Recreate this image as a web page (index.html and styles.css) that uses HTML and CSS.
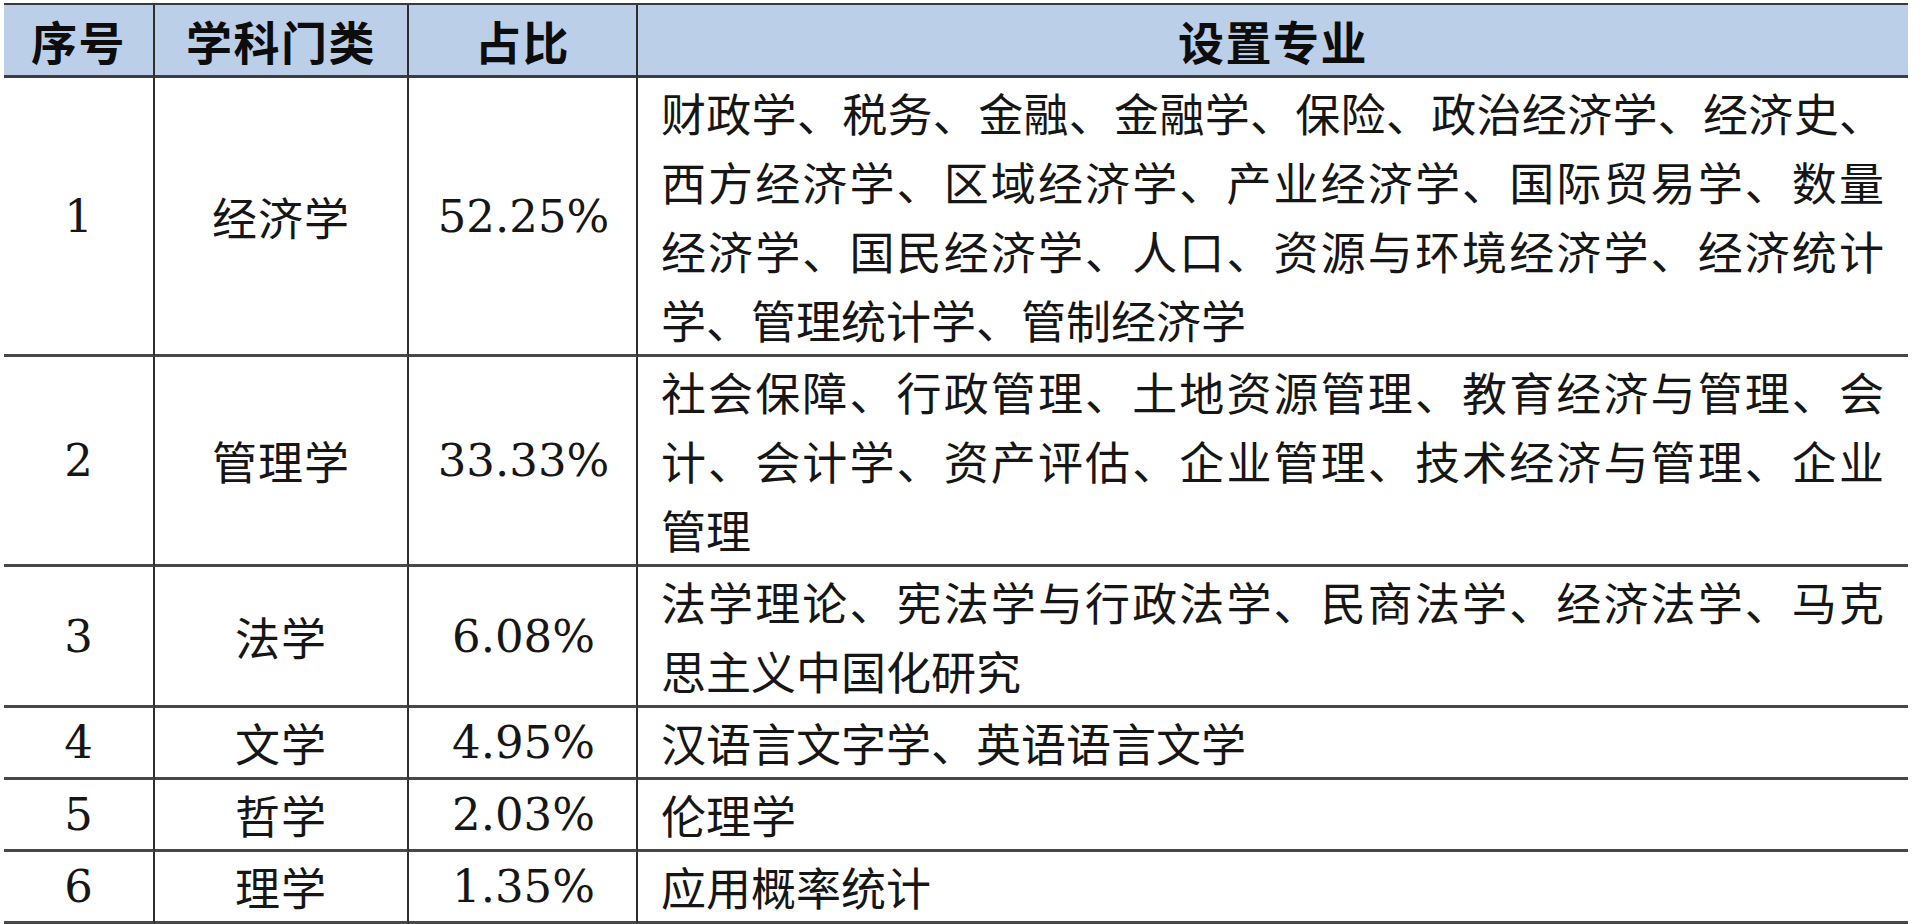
FILE: index.html
```html
<!DOCTYPE html>
<html lang="zh-CN">
<head>
<meta charset="utf-8">
<title>学科门类占比</title>
<link rel="stylesheet" href="styles.css">
</head>
<body>
<div class="table" role="table">
  <div class="th">序号</div>
  <div class="th">学科门类</div>
  <div class="th">占比</div>
  <div class="th last">设置专业</div>

  <div class="td num">1</div>
  <div class="td name">经济学</div>
  <div class="td pct">52.25%</div>
  <div class="td majors">
    <span class="ln">财政学、税务、金融、金融学、保险、政治经济学、经济史、</span>
    <span class="ln">西方经济学、区域经济学、产业经济学、国际贸易学、数量</span>
    <span class="ln">经济学、国民经济学、人口、资源与环境经济学、经济统计</span>
    <span class="end">学、管理统计学、管制经济学</span>
  </div>

  <div class="td num">2</div>
  <div class="td name">管理学</div>
  <div class="td pct">33.33%</div>
  <div class="td majors">
    <span class="ln">社会保障、行政管理、土地资源管理、教育经济与管理、会</span>
    <span class="ln">计、会计学、资产评估、企业管理、技术经济与管理、企业</span>
    <span class="end">管理</span>
  </div>

  <div class="td num">3</div>
  <div class="td name">法学</div>
  <div class="td pct">6.08%</div>
  <div class="td majors">
    <span class="ln">法学理论、宪法学与行政法学、民商法学、经济法学、马克</span>
    <span class="end">思主义中国化研究</span>
  </div>

  <div class="td num">4</div>
  <div class="td name">文学</div>
  <div class="td pct">4.95%</div>
  <div class="td majors"><span class="end">汉语言文字学、英语语言文学</span></div>

  <div class="td num">5</div>
  <div class="td name">哲学</div>
  <div class="td pct">2.03%</div>
  <div class="td majors"><span class="end">伦理学</span></div>

  <div class="td num">6</div>
  <div class="td name">理学</div>
  <div class="td pct">1.35%</div>
  <div class="td majors"><span class="end">应用概率统计</span></div>
</div>
</body>
</html>
```

FILE: styles.css
```css
html, body {
  margin: 0;
  padding: 0;
  background: #ffffff;
}

body {
  width: 1920px;
  height: 924px;
  overflow: hidden;
  color: #161616;
  font-family: "DejaVu Serif", "Noto Sans CJK SC", serif;
}

.table {
  display: grid;
  grid-template-columns: 151px 254px 229px 1270px;
  margin: 3px 0 0 4px;
  width: 1904px;
  border-top: 2px solid #3a3a3a;
}

.th,
.td {
  box-sizing: border-box;
  border-bottom: 3px solid #484848;
  border-right: 2px solid #2e2e2e;
}

.th {
  display: flex;
  align-items: center;
  justify-content: center;
  height: 73px;
  background: #bccfe9;
  border-bottom-color: #3d3d3d;
  font-family: "Noto Sans CJK SC", sans-serif;
  font-weight: 700;
  font-size: 46px;
  letter-spacing: 1.5px;
  line-height: 70px;
  color: #0d0d0d;
}

.th.last,
.td.majors {
  border-right: none;
}

.td {
  font-size: 45px;
  line-height: 69px;
}

.num,
.name,
.pct {
  display: flex;
  align-items: center;
  justify-content: center;
}

.name {
  font-family: "Noto Sans CJK SC", sans-serif;
  letter-spacing: 1px;
}

.pct {
  padding-left: 2px;
}

.majors {
  padding: 0 24px 0 23px;
  font-family: "Noto Sans CJK SC", sans-serif;
}

.majors .ln,
.majors .end {
  display: block;
  white-space: nowrap;
}

.majors .ln {
  text-align: justify;
  text-align-last: justify;
  text-justify: inter-character;
}

.majors .end {
  text-align: left;
}
```
